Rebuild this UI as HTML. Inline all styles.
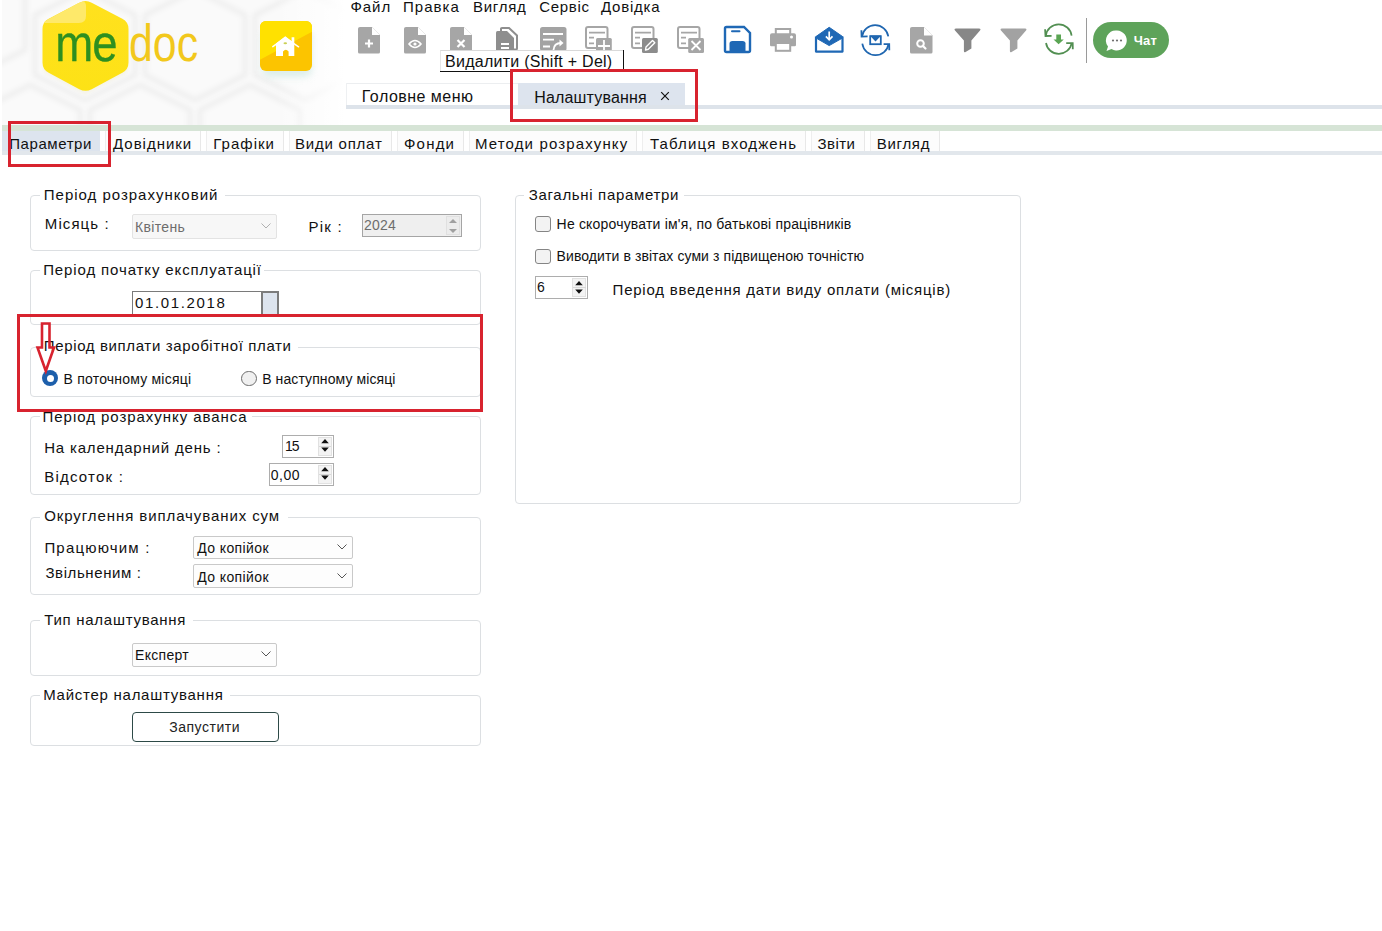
<!DOCTYPE html>
<html><head><meta charset="utf-8">
<style>
html,body{margin:0;padding:0;}
body{width:1382px;height:931px;position:relative;overflow:hidden;background:#fff;font-family:"Liberation Sans",sans-serif;}
.a{position:absolute;box-sizing:border-box;}
.t{position:absolute;white-space:pre;font-family:"Liberation Sans",sans-serif;}
.fs{position:absolute;box-sizing:border-box;border:1px solid #dcdfe2;border-radius:4px;}
.lg{position:absolute;background:#fff;height:8px;}
.red{position:absolute;box-sizing:border-box;border:3px solid #d8232f;}
.sel{position:absolute;box-sizing:border-box;border:1px solid #cfcfcf;background:#fdfdfd;border-radius:2px;}
.spin{position:absolute;box-sizing:border-box;border:1px solid #adadad;background:#fff;}
svg{position:absolute;overflow:visible;}
</style></head>
<body>
<!-- header honeycomb background -->
<div class="a" style="left:0;top:0;width:345px;height:125px;overflow:hidden">
<svg style="left:0;top:0;overflow:hidden" width="345" height="125" viewBox="0 0 345 125">
  <defs>
    <filter id="bl" x="-30%" y="-30%" width="160%" height="160%"><feGaussianBlur stdDeviation="2.5"/></filter>
    <linearGradient id="fade" x1="0" y1="0" x2="1" y2="0"><stop offset="0.8" stop-color="#fff" stop-opacity="0"/><stop offset="1" stop-color="#fff" stop-opacity="1"/></linearGradient>
  </defs>
  <rect x="0" y="0" width="345" height="125" fill="#fafafa"/>
  <g fill="none" stroke="#efefef" stroke-width="5" filter="url(#bl)" stroke-linejoin="round">
    <path d="M-25 -30 L25 -5 L25 50 L-25 75 L-75 50 L-75 -5 Z"/>
    <path d="M85 -10 L135 15 L135 75 L85 100 L35 75 L35 15 Z"/>
    <path d="M195 -10 L245 15 L245 75 L195 100 L145 75 L145 15 Z"/>
    <path d="M305 -10 L355 15 L355 75 L305 100 L255 75 L255 15 Z"/>
    <path d="M30 85 L80 110 L80 170 L30 195 L-20 170 L-20 110 Z"/>
    <path d="M140 85 L190 110 L190 170 L140 195 L90 170 L90 110 Z"/>
    <path d="M250 85 L300 110 L300 170 L250 195 L200 170 L200 110 Z"/>
  </g>
  <rect x="0" y="0" width="345" height="125" fill="url(#fade)"/>
  <rect x="0" y="0" width="2" height="125" fill="#fff"/>
</svg>
</div>

<!-- logo hexagon -->
<svg style="left:0;top:0" width="210" height="100" viewBox="0 0 210 100">
  <defs>
    <linearGradient id="hg" x1="0" y1="0" x2="0" y2="1">
      <stop offset="0" stop-color="#ffe11e"/><stop offset="1" stop-color="#fde216"/>
    </linearGradient>
    <filter id="hs" x="-20%" y="-20%" width="140%" height="140%"><feGaussianBlur stdDeviation="1.5"/></filter>
  </defs>
  <path d="M85 3 Q86 1 88 2 L125 21 Q128 23 128 27 L128 66 Q128 70 125 72 L88 91 Q85 93 82 91 L46 72 Q43 70 43 66 L43 27 Q43 23 46 22 Z" fill="#ece7c8" opacity="0.35" filter="url(#hs)" transform="translate(0,2)"/>
  <path d="M79.3 2.7 Q85.5 -0.5 91.7 2.7 L122.3 18.8 Q128.5 22.0 128.5 29.0 L128.5 62.5 Q128.5 69.5 122.3 72.8 L91.7 89.2 Q85.5 92.5 79.3 89.2 L48.7 72.8 Q42.5 69.5 42.5 62.5 L42.5 29.0 Q42.5 22.0 48.7 18.8 Z" fill="url(#hg)"/>
  <path d="M78 3.2 Q86 -1 86 6 L86 16 Q86 23 79 23 L44 23 Q44 21.5 47 20 Z" fill="#fee96a"/>
  <text x="55" y="60.6" font-family="Liberation Sans" font-size="53" fill="#2e8f20" stroke="#2e8f20" stroke-width="0.3" transform="translate(56,60.6) scale(0.86,0.98) translate(-56,-60.6)" letter-spacing="-1">me</text>
  <text x="129" y="60.6" font-family="Liberation Sans" font-size="51" fill="#f2c81c" transform="translate(129,60.6) scale(0.84,1) translate(-129,-60.6)">doc</text>
</svg>

<!-- home button -->
<div class="a" style="left:262px;top:30px;width:50px;height:47px;border-radius:8px;background:#d5ebe6;filter:blur(3.5px);opacity:0.8"></div>
<svg style="left:0;top:0" width="330" height="80" viewBox="0 0 330 80">
  <defs><clipPath id="hb"><rect x="260" y="21" width="52" height="50" rx="6"/></clipPath></defs>
  <g clip-path="url(#hb)">
    <rect x="260" y="21" width="52" height="50" fill="#fcc400"/>
    <path d="M258 19 L314 19 L314 30.7 L258 60.9 Z" fill="#ffe100"/>
  </g>
  <path d="M276 56 L276 43.5 L285.3 36.3 L291.6 41.2 L291.6 37.2 L294.3 37.2 L294.3 43.3 L294.3 56 L288.6 56 L288.6 51.5 Q285.8 48.2 283 51.5 L283 56 Z" fill="#fff"/>
  <path d="M272.8 46.6 L285.3 37.6 L298.6 46.8" fill="none" stroke="#fff" stroke-width="1.5" stroke-linecap="round"/>
  <ellipse cx="285.3" cy="43.2" rx="1.8" ry="1" fill="#c9cf54"/>
</svg>

<!-- toolbar icons -->
<!-- 1 doc plus -->
<svg style="left:358px;top:26.5px" width="23" height="27" viewBox="0 0 23 27">
  <path d="M2 0 L14 0 L22 8 L22 25 Q22 26.5 20.5 26.5 L1.5 26.5 Q0 26.5 0 25 L0 1.5 Q0 0 2 0 Z" fill="#a6a6a6"/>
  <path d="M14 0 L22 8 L14 8 Z" fill="#fff"/>
  <path d="M11 12.5 L11 20.5 M7 16.5 L15 16.5" stroke="#fff" stroke-width="2.2"/>
</svg>
<!-- 2 doc eye -->
<svg style="left:404px;top:26.5px" width="23" height="27" viewBox="0 0 23 27">
  <path d="M2 0 L14 0 L22 8 L22 25 Q22 26.5 20.5 26.5 L1.5 26.5 Q0 26.5 0 25 L0 1.5 Q0 0 2 0 Z" fill="#a6a6a6"/>
  <path d="M14 0 L22 8 L14 8 Z" fill="#fff"/>
  <path d="M5 17 Q11 10 17 17 Q11 24 5 17 Z" fill="none" stroke="#fff" stroke-width="1.6"/>
  <circle cx="11" cy="17" r="1.6" fill="#fff"/>
</svg>
<!-- 3 doc x -->
<svg style="left:450px;top:26.5px" width="23" height="27" viewBox="0 0 23 27">
  <path d="M2 0 L14 0 L22 8 L22 25 Q22 26.5 20.5 26.5 L1.5 26.5 Q0 26.5 0 25 L0 1.5 Q0 0 2 0 Z" fill="#a6a6a6"/>
  <path d="M14 0 L22 8 L14 8 Z" fill="#fff"/>
  <path d="M7.5 13 L14.5 20 M14.5 13 L7.5 20" stroke="#fff" stroke-width="2.2"/>
</svg>
<!-- 4 stacked docs -->
<svg style="left:496px;top:26.5px" width="23" height="27" viewBox="0 0 23 27">
  <path d="M5 4 L5 1.5 Q5 1 6 1 L13 1 L21 8.5 L21 21.5 Q21 22.5 20 22.5 L18 22.5" fill="none" stroke="#8e8e8e" stroke-width="2"/>
  <path d="M1.5 4 L11 4 L18 11 L18 27 L0 27 L0 5.5 Q0 4 1.5 4 Z" fill="#8e8e8e"/>
  <path d="M5 17 L13 17 M5 21 L13 21" stroke="#fff" stroke-width="2"/>
</svg>
<!-- 5 list redo -->
<svg style="left:540px;top:26.8px" width="27" height="24" viewBox="0 0 27 24">
  <rect x="0" y="0" width="26.5" height="24" rx="2.5" fill="#a3a3a3"/>
  <path d="M3 7 L23 7 M3 12.6 L14 12.6 M3 19.5 L10 19.5" stroke="#fff" stroke-width="1.8"/>
  <path d="M13.5 23 Q14 16 21 16" fill="none" stroke="#fff" stroke-width="1.8"/>
  <path d="M19.5 12.5 L23.5 16 L19.5 19.5 Z" fill="#fff"/>
</svg>
<!-- 6 list add -->
<svg style="left:585px;top:26px" width="27" height="27" viewBox="0 0 27 27">
  <rect x="1" y="1" width="21.5" height="21" rx="2" fill="none" stroke="#a6a6a6" stroke-width="2"/>
  <path d="M4 6.7 L20 6.7 M4 11.7 L9 11.7 M4 17.4 L9 17.4" stroke="#a6a6a6" stroke-width="1.7"/>
  <rect x="11" y="12" width="15.8" height="15" rx="1.5" fill="#a6a6a6"/>
  <path d="M19 14 L19 26 M13 20 L25 20" stroke="#fff" stroke-width="1.8"/>
</svg>
<!-- 7 list edit -->
<svg style="left:631px;top:26px" width="27" height="27" viewBox="0 0 27 27">
  <rect x="1" y="1" width="21.5" height="21" rx="2" fill="none" stroke="#a6a6a6" stroke-width="2"/>
  <path d="M4 6.7 L20 6.7 M4 11.7 L9 11.7 M4 17.4 L9 17.4" stroke="#a6a6a6" stroke-width="1.7"/>
  <rect x="11" y="12" width="15.8" height="15" rx="1.5" fill="#8c8c8c"/>
  <path d="M14.5 24 L15 21 L21.5 14.5 L23.8 16.8 L17.3 23.3 Z" fill="none" stroke="#fff" stroke-width="1.4" stroke-linejoin="round"/>
</svg>
<!-- 8 list x -->
<svg style="left:677px;top:26px" width="28" height="27" viewBox="0 0 28 27">
  <rect x="1" y="1" width="21.5" height="21" rx="2" fill="none" stroke="#a6a6a6" stroke-width="2"/>
  <path d="M4 6.7 L20 6.7 M4 11.7 L9 11.7 M4 17.4 L9 17.4" stroke="#a6a6a6" stroke-width="1.7"/>
  <rect x="11.2" y="12" width="15.8" height="15" rx="1.5" fill="#a6a6a6"/>
  <path d="M14.5 15 L23.5 24 M23.5 15 L14.5 24" stroke="#fff" stroke-width="1.8"/>
</svg>
<!-- 9 save -->
<svg style="left:723.5px;top:26.3px" width="27" height="27" viewBox="0 0 27 27">
  <path d="M2.5 1 L20 1 L26 7 L26 24.5 Q26 26 24.5 26 L2.5 26 Q1 26 1 24.5 L1 2.5 Q1 1 2.5 1 Z" fill="none" stroke="#1f68b5" stroke-width="2.4"/>
  <path d="M8 5.2 L15.5 5.2" stroke="#1f68b5" stroke-width="2" stroke-linecap="round"/>
  <path d="M5.5 26 L5.5 17.5 Q5.5 15 8.5 15 L18.5 15 Q21.5 15 21.5 17.5 L21.5 26 Z" fill="#1f68b5"/>
</svg>
<!-- 10 print -->
<svg style="left:769.4px;top:28px" width="28" height="24" viewBox="0 0 28 24">
  <rect x="6.8" y="1" width="14.4" height="6" fill="none" stroke="#a6a6a6" stroke-width="2"/>
  <path d="M3 5.2 L25 5.2 Q27 5.2 27 7.2 L27 17 Q27 18.3 25.7 18.3 L22 18.3 L22 15 L6 15 L6 18.3 L2.3 18.3 Q1 18.3 1 17 L1 7.2 Q1 5.2 3 5.2 Z" fill="#a6a6a6"/>
  <rect x="6.8" y="15" width="14.4" height="7.8" fill="none" stroke="#a6a6a6" stroke-width="2"/>
  <circle cx="22.5" cy="9" r="1.5" fill="#fff"/>
</svg>
<!-- 11 mail download -->
<svg style="left:815px;top:26.8px" width="29" height="26" viewBox="0 0 29 26">
  <path d="M1 9.5 L14.2 0.3 L27.5 9.5 L27.5 11 L14.2 18.6 L1 11 Z" fill="#1f68b5" stroke="#1f68b5" stroke-width="1" stroke-linejoin="round"/>
  <path d="M1 9.5 L1 24.6 L27.5 24.6 L27.5 9.5" fill="none" stroke="#1f68b5" stroke-width="2.2" stroke-linejoin="round"/>
  <path d="M14.2 4.6 L14.2 12.6 M10.9 9.4 L14.2 12.8 L17.5 9.4" fill="none" stroke="#fff" stroke-width="1.7"/>
</svg>
<!-- 12 sync mail -->
<svg style="left:860.7px;top:25.8px" width="29" height="29" viewBox="0 0 29 29">
  <path d="M1 10.6 A13.3 13.3 0 0 1 27.3 10.4" fill="none" stroke="#1f66b0" stroke-width="1.7"/>
  <path d="M1.3 17.7 A13.3 13.3 0 0 0 27.6 18" fill="none" stroke="#1f66b0" stroke-width="1.7"/>
  <path d="M0.4 4.2 L0.6 10.6 L6.6 10.4" fill="none" stroke="#1f66b0" stroke-width="1.8"/>
  <path d="M22.6 18.2 L28.2 18.2 L28.3 24.3" fill="none" stroke="#1f66b0" stroke-width="1.8"/>
  <rect x="9.2" y="10.2" width="10.6" height="8" fill="none" stroke="#1f66b0" stroke-width="1.8"/>
  <path d="M8.8 9.6 L20.2 9.6 L14.5 15.6 Z" fill="#1f66b0"/>
</svg>
<!-- 13 doc search -->
<svg style="left:909.7px;top:26.8px" width="23" height="27" viewBox="0 0 23 27">
  <path d="M2 0 L14 0 L22.5 8.5 L22.5 25 Q22.5 26.5 21 26.5 L1.5 26.5 Q0 26.5 0 25 L0 1.5 Q0 0 2 0 Z" fill="#a6a6a6"/>
  <path d="M14 0 L22.5 8.5 L14 8.5 Z" fill="#fff"/>
  <circle cx="10.5" cy="16.5" r="3.3" fill="none" stroke="#fff" stroke-width="2"/>
  <path d="M13 19 L15.5 21.5" stroke="#fff" stroke-width="2.2" stroke-linecap="round"/>
</svg>
<!-- 14 filter dark -->
<svg style="left:953.5px;top:27.5px" width="27" height="25" viewBox="0 0 27 25">
  <path d="M2 0.5 L25 0.5 Q27.3 0.7 26 2.6 L17.4 12.6 L17.4 20.5 L11.6 24 Q9.9 24.8 9.9 23 L9.9 12.6 L1 2.6 Q-0.3 0.7 2 0.5 Z" fill="#878787"/>
</svg>
<!-- 15 filter -->
<svg style="left:999.9px;top:27.5px" width="27" height="25" viewBox="0 0 27 25">
  <path d="M2 0.5 L25 0.5 Q27.3 0.7 26 2.6 L17.4 12.6 L17.4 20.5 L11.6 24 Q9.9 24.8 9.9 23 L9.9 12.6 L1 2.6 Q-0.3 0.7 2 0.5 Z" fill="#a2a2a2"/>
</svg>
<!-- 16 sync down green -->
<svg style="left:1044.2px;top:25.4px" width="30" height="29" viewBox="0 0 30 29">
  <path d="M1.8 10.8 A13 13 0 0 1 27.6 10.6" fill="none" stroke="#528f52" stroke-width="1.7"/>
  <path d="M2 18 A13 13 0 0 0 27.6 18.3" fill="none" stroke="#528f52" stroke-width="1.7"/>
  <path d="M1.1 4.3 L1.5 11 L7.6 10.8" fill="none" stroke="#528f52" stroke-width="1.8"/>
  <path d="M22.2 18.2 L28.7 18.2 L28.8 24.3" fill="none" stroke="#528f52" stroke-width="1.8"/>
  <path d="M12.3 9.6 L17 9.6 L17 14.4 L19.8 14.4 L14.6 19.3 L9.5 14.4 L12.3 14.4 Z" fill="#5aa553"/>
</svg>
<!-- separator -->
<div class="a" style="left:1086px;top:17.5px;width:1px;height:45px;background:#9a9a9a"></div>
<!-- chat -->
<div class="a" style="left:1093px;top:22px;width:76px;height:36px;border-radius:18px;background:#5ea35a"></div>
<svg style="left:1106px;top:30px" width="22" height="22" viewBox="0 0 22 22">
  <path d="M11 0.5 A10 10 0 1 1 5.5 19 L0.5 21 L2 16.5 A10 10 0 0 1 11 0.5 Z" fill="#fff"/>
  <circle cx="7" cy="10.5" r="1.1" fill="#707070"/><circle cx="11" cy="10.5" r="1.1" fill="#707070"/><circle cx="15" cy="10.5" r="1.1" fill="#707070"/>
</svg>

<!-- tooltip -->
<div class="a" style="left:440px;top:50px;width:184px;height:22px;background:#fff;border-top:1px solid #d9d9d9;border-left:1px solid #e6e6e6;"></div>
<div class="a" style="left:623px;top:50px;width:1.2px;height:19px;background:#111"></div>
<div class="a" style="left:440px;top:70.8px;width:72px;height:1.4px;background:#111"></div>

<!-- top tabs -->
<div class="a" style="left:346px;top:83px;width:172px;height:1px;background:#eceef0"></div>
<div class="a" style="left:346px;top:83px;width:1px;height:23px;background:#eef0f2"></div>
<div class="a" style="left:346px;top:105px;width:1036px;height:3.5px;background:#dde3ea"></div>
<div class="a" style="left:518px;top:83px;width:167px;height:22px;background:#dde4ee"></div>
<svg style="left:660px;top:91px" width="10" height="10" viewBox="0 0 10 10">
  <path d="M1.2 1.2 L8.8 8.8 M8.8 1.2 L1.2 8.8" stroke="#111" stroke-width="1.2"/>
</svg>

<!-- green band & tab row -->
<div class="a" style="left:2px;top:125px;width:1380px;height:6px;background:#d6e4d6"></div>
<div class="a" style="left:2px;top:131px;width:1380px;height:20px;background:#fff"></div>
<div class="a" style="left:2px;top:150.5px;width:1380px;height:4px;background:#e2e7ec"></div>
<div class="a" style="left:2px;top:131px;width:98px;height:19.5px;background:#dde4ee"></div>
<div class="a" style="left:100px;top:131px;width:6px;height:19.5px;background:#fff;border-right:1px solid #eee"></div>
<div class="a" style="left:106px;top:131px;width:95px;height:19.5px;background:#fcfcfc;border-right:1px solid #e8e8e8"></div>
<div class="a" style="left:206px;top:131px;width:78px;height:19.5px;background:#fcfcfc;border-left:1px solid #eee;border-right:1px solid #e8e8e8"></div>
<div class="a" style="left:289px;top:131px;width:103px;height:19.5px;background:#fcfcfc;border-left:1px solid #eee;border-right:1px solid #e8e8e8"></div>
<div class="a" style="left:397px;top:131px;width:67px;height:19.5px;background:#fcfcfc;border-left:1px solid #eee;border-right:1px solid #e8e8e8"></div>
<div class="a" style="left:469px;top:131px;width:168px;height:19.5px;background:#fcfcfc;border-left:1px solid #eee;border-right:1px solid #e8e8e8"></div>
<div class="a" style="left:642px;top:131px;width:164px;height:19.5px;background:#fcfcfc;border-left:1px solid #eee;border-right:1px solid #e8e8e8"></div>
<div class="a" style="left:811px;top:131px;width:54px;height:19.5px;background:#fcfcfc;border-left:1px solid #eee;border-right:1px solid #e8e8e8"></div>
<div class="a" style="left:870px;top:131px;width:70px;height:19.5px;background:#fcfcfc;border-left:1px solid #eee;border-right:1px solid #e8e8e8"></div>

<!-- fieldsets left -->
<div class="fs" style="left:30px;top:195px;width:451px;height:55.5px"></div>
<div class="lg" style="left:40px;top:191px;width:185px"></div>
<div class="sel" style="left:132px;top:214px;width:145px;height:24.5px;background:#f7f7f7;border-color:#e3e3e3"></div>
<svg style="left:261px;top:223px" width="10" height="6" viewBox="0 0 10 6"><path d="M0.5 0.5 L5 5 L9.5 0.5" fill="none" stroke="#b0b0b0" stroke-width="1"/></svg>
<div class="spin" style="left:362px;top:214px;width:100px;height:22.5px;background:#efefef;border-color:#a5a5a5"></div>
<div class="a" style="left:446px;top:216px;width:14px;height:18.5px;background:#ececec;border:1px solid #e0e0e0"></div>
<svg style="left:448px;top:217.5px" width="10" height="16" viewBox="0 0 10 16"><path d="M1 5 L5 1 L9 5 Z M1 11 L5 15 L9 11 Z" fill="#a0a0a0"/></svg>

<div class="fs" style="left:30px;top:270px;width:451px;height:54.5px"></div>
<div class="lg" style="left:40px;top:266px;width:224px"></div>
<div class="spin" style="left:132px;top:291px;width:147px;height:26px;border-color:#7a7a7a"></div>
<div class="a" style="left:261px;top:291px;width:18px;height:26px;background:#dde4ee;border:2px solid #7c7c7c"></div>

<div class="fs" style="left:30px;top:347px;width:451px;height:50px"></div>
<div class="lg" style="left:40px;top:343px;width:258px"></div>
<div class="a" style="left:42px;top:370px;width:16px;height:16px;border-radius:50%;background:#1d5fab"></div>
<div class="a" style="left:46.5px;top:374.5px;width:7px;height:7px;border-radius:50%;background:#fff"></div>
<div class="a" style="left:241px;top:370.5px;width:15.5px;height:15.5px;border-radius:50%;background:#f0f0f0;border:1px solid #6c6c6c"></div>

<div class="fs" style="left:30px;top:416px;width:451px;height:78.5px"></div>
<div class="lg" style="left:40px;top:412px;width:212px"></div>
<div class="spin" style="left:282px;top:435px;width:51.5px;height:23px"></div>
<div class="a" style="left:318px;top:437px;width:13.5px;height:19px;background:#f3f3f3;border:1px solid #e1e1e1"></div>
<div class="a" style="left:318.5px;top:446px;width:12.5px;height:1px;background:#d8d8d8"></div><svg style="left:320px;top:437px" width="10" height="17" viewBox="0 0 10 17"><path d="M1.2 6.2 L5 2 L8.8 6.2 Z M1.2 10.5 L5 14.7 L8.8 10.5 Z" fill="#111"/></svg>
<div class="spin" style="left:269px;top:463px;width:64.5px;height:22.5px"></div>
<div class="a" style="left:318px;top:465px;width:13.5px;height:18.5px;background:#f3f3f3;border:1px solid #e1e1e1"></div>
<div class="a" style="left:318.5px;top:474px;width:12.5px;height:1px;background:#d8d8d8"></div><svg style="left:320px;top:465px" width="10" height="17" viewBox="0 0 10 17"><path d="M1.2 6.2 L5 2 L8.8 6.2 Z M1.2 10.5 L5 14.7 L8.8 10.5 Z" fill="#111"/></svg>

<div class="fs" style="left:30px;top:517px;width:451px;height:77.5px"></div>
<div class="lg" style="left:40px;top:513px;width:248px"></div>
<div class="sel" style="left:193px;top:535.5px;width:159.5px;height:23.5px;border-color:#c9c9c9"></div>
<svg style="left:337px;top:544px" width="10" height="6" viewBox="0 0 10 6"><path d="M0.5 0.5 L5 5 L9.5 0.5" fill="none" stroke="#555" stroke-width="1"/></svg>
<div class="sel" style="left:193px;top:564px;width:159.5px;height:23.5px;border-color:#c9c9c9"></div>
<svg style="left:337px;top:572.5px" width="10" height="6" viewBox="0 0 10 6"><path d="M0.5 0.5 L5 5 L9.5 0.5" fill="none" stroke="#555" stroke-width="1"/></svg>

<div class="fs" style="left:30px;top:620px;width:451px;height:55.5px"></div>
<div class="lg" style="left:40px;top:616px;width:153px"></div>
<div class="sel" style="left:132px;top:642.5px;width:145px;height:24px;border-color:#c9c9c9"></div>
<svg style="left:261px;top:651px" width="10" height="6" viewBox="0 0 10 6"><path d="M0.5 0.5 L5 5 L9.5 0.5" fill="none" stroke="#555" stroke-width="1"/></svg>

<div class="fs" style="left:30px;top:695px;width:451px;height:50.5px"></div>
<div class="lg" style="left:40px;top:691px;width:190px"></div>
<div class="a" style="left:132px;top:712px;width:147px;height:29.5px;border:1.3px solid #2d4a47;border-radius:4px;background:#fff"></div>

<!-- right fieldset -->
<div class="fs" style="left:515px;top:195px;width:506px;height:308.5px"></div>
<div class="lg" style="left:524px;top:191px;width:160px"></div>
<div class="a" style="left:535px;top:216px;width:16px;height:15.5px;border-radius:3px;background:#f3f3f3;border:1px solid #858585"></div>
<div class="a" style="left:535px;top:248.5px;width:16px;height:15.5px;border-radius:3px;background:#f3f3f3;border:1px solid #858585"></div>
<div class="spin" style="left:535px;top:276px;width:53px;height:23px"></div>
<div class="a" style="left:572px;top:278px;width:14px;height:19px;background:#f3f3f3;border:1px solid #e1e1e1"></div>
<div class="a" style="left:572.5px;top:286.5px;width:13px;height:1px;background:#d8d8d8"></div><svg style="left:574px;top:278.5px" width="10" height="17" viewBox="0 0 10 17"><path d="M1.2 6.2 L5 2 L8.8 6.2 Z M1.2 10.5 L5 14.7 L8.8 10.5 Z" fill="#111"/></svg>

<div class="t" style="left:350.4px;top:-0.70px;font-size:15px;line-height:15px;letter-spacing:0.970px;color:#111;font-weight:400;-webkit-text-stroke:0px #111">Файл</div>
<div class="t" style="left:403.0px;top:-0.70px;font-size:15px;line-height:15px;letter-spacing:1.026px;color:#111;font-weight:400;-webkit-text-stroke:0px #111">Правка</div>
<div class="t" style="left:473.0px;top:-0.70px;font-size:15px;line-height:15px;letter-spacing:0.729px;color:#111;font-weight:400;-webkit-text-stroke:0px #111">Вигляд</div>
<div class="t" style="left:539.2px;top:-0.70px;font-size:15px;line-height:15px;letter-spacing:0.694px;color:#111;font-weight:400;-webkit-text-stroke:0px #111">Сервіс</div>
<div class="t" style="left:601.0px;top:-0.70px;font-size:15px;line-height:15px;letter-spacing:0.772px;color:#111;font-weight:400;-webkit-text-stroke:0px #111">Довідка</div>
<div class="t" style="left:445.0px;top:53.86px;font-size:16px;line-height:16px;letter-spacing:0.260px;color:#111;font-weight:400">Видалити (Shift + Del)</div>
<div class="t" style="left:361.8px;top:88.86px;font-size:16px;line-height:16px;letter-spacing:0.476px;color:#111;font-weight:400">Головне меню</div>
<div class="t" style="left:534.2px;top:89.76px;font-size:16px;line-height:16px;letter-spacing:0.182px;color:#111;font-weight:400">Налаштування</div>
<div class="t" style="left:9.2px;top:136.10px;font-size:15px;line-height:15px;letter-spacing:0.580px;color:#111;font-weight:400;-webkit-text-stroke:0px #111">Параметри</div>
<div class="t" style="left:113.0px;top:136.10px;font-size:15px;line-height:15px;letter-spacing:0.984px;color:#111;font-weight:400;-webkit-text-stroke:0px #111">Довідники</div>
<div class="t" style="left:213.2px;top:136.10px;font-size:15px;line-height:15px;letter-spacing:1.034px;color:#111;font-weight:400;-webkit-text-stroke:0px #111">Графіки</div>
<div class="t" style="left:295.0px;top:136.10px;font-size:15px;line-height:15px;letter-spacing:0.778px;color:#111;font-weight:400;-webkit-text-stroke:0px #111">Види оплат</div>
<div class="t" style="left:404.0px;top:136.10px;font-size:15px;line-height:15px;letter-spacing:1.207px;color:#111;font-weight:400;-webkit-text-stroke:0px #111">Фонди</div>
<div class="t" style="left:475.0px;top:136.10px;font-size:15px;line-height:15px;letter-spacing:1.130px;color:#111;font-weight:400;-webkit-text-stroke:0px #111">Методи розрахунку</div>
<div class="t" style="left:650.0px;top:136.10px;font-size:15px;line-height:15px;letter-spacing:1.113px;color:#111;font-weight:400;-webkit-text-stroke:0px #111">Таблиця входжень</div>
<div class="t" style="left:817.6px;top:136.10px;font-size:15px;line-height:15px;letter-spacing:0.394px;color:#111;font-weight:400;-webkit-text-stroke:0px #111">Звіти</div>
<div class="t" style="left:876.8px;top:136.10px;font-size:15px;line-height:15px;letter-spacing:0.689px;color:#111;font-weight:400;-webkit-text-stroke:0px #111">Вигляд</div>
<div class="t" style="left:43.8px;top:187.40px;font-size:15px;line-height:15px;letter-spacing:0.984px;color:#111;font-weight:400;-webkit-text-stroke:0px #111">Період розрахунковий</div>
<div class="t" style="left:44.8px;top:216.00px;font-size:15px;line-height:15px;letter-spacing:1.085px;color:#111;font-weight:400;-webkit-text-stroke:0px #111">Місяць :</div>
<div class="t" style="left:135.0px;top:219.75px;font-size:14px;line-height:14px;letter-spacing:0.336px;color:#6d6d6d;font-weight:400">Квітень</div>
<div class="t" style="left:308.4px;top:218.50px;font-size:15px;line-height:15px;letter-spacing:1.238px;color:#111;font-weight:400;-webkit-text-stroke:0px #111">Рік :</div>
<div class="t" style="left:364.0px;top:217.85px;font-size:14px;line-height:14px;letter-spacing:0.215px;color:#6d6d6d;font-weight:400">2024</div>
<div class="t" style="left:43.2px;top:262.00px;font-size:15px;line-height:15px;letter-spacing:0.881px;color:#111;font-weight:400;-webkit-text-stroke:0px #111">Період початку експлуатації</div>
<div class="t" style="left:135.0px;top:295.40px;font-size:15px;line-height:15px;letter-spacing:1.636px;color:#111;font-weight:400;-webkit-text-stroke:0px #111">01.01.2018</div>
<div class="t" style="left:43.8px;top:338.00px;font-size:15px;line-height:15px;letter-spacing:0.634px;color:#111;font-weight:400;-webkit-text-stroke:0px #111">Період виплати заробітної плати</div>
<div class="t" style="left:63.6px;top:371.65px;font-size:14px;line-height:14px;letter-spacing:0.203px;color:#111;font-weight:400">В поточному місяці</div>
<div class="t" style="left:262.2px;top:371.65px;font-size:14px;line-height:14px;letter-spacing:0.093px;color:#111;font-weight:400">В наступному місяці</div>
<div class="t" style="left:42.6px;top:408.80px;font-size:15px;line-height:15px;letter-spacing:0.952px;color:#111;font-weight:400;-webkit-text-stroke:0px #111">Період розрахунку аванса</div>
<div class="t" style="left:44.2px;top:440.30px;font-size:15px;line-height:15px;letter-spacing:0.813px;color:#111;font-weight:400;-webkit-text-stroke:0px #111">На календарний день :</div>
<div class="t" style="left:285.0px;top:438.75px;font-size:14px;line-height:14px;letter-spacing:-0.978px;color:#111;font-weight:400">15</div>
<div class="t" style="left:44.2px;top:469.20px;font-size:15px;line-height:15px;letter-spacing:1.231px;color:#111;font-weight:400;-webkit-text-stroke:0px #111">Відсоток :</div>
<div class="t" style="left:270.8px;top:467.75px;font-size:14px;line-height:14px;letter-spacing:0.517px;color:#111;font-weight:400">0,00</div>
<div class="t" style="left:44.2px;top:508.10px;font-size:15px;line-height:15px;letter-spacing:0.916px;color:#111;font-weight:400;-webkit-text-stroke:0px #111">Округлення виплачуваних сум</div>
<div class="t" style="left:44.4px;top:540.00px;font-size:15px;line-height:15px;letter-spacing:1.192px;color:#111;font-weight:400;-webkit-text-stroke:0px #111">Працюючим :</div>
<div class="t" style="left:197.2px;top:541.35px;font-size:14px;line-height:14px;letter-spacing:0.399px;color:#111;font-weight:400">До копійок</div>
<div class="t" style="left:45.4px;top:564.50px;font-size:15px;line-height:15px;letter-spacing:0.611px;color:#111;font-weight:400;-webkit-text-stroke:0px #111">Звільненим :</div>
<div class="t" style="left:197.2px;top:569.65px;font-size:14px;line-height:14px;letter-spacing:0.399px;color:#111;font-weight:400">До копійок</div>
<div class="t" style="left:44.2px;top:612.00px;font-size:15px;line-height:15px;letter-spacing:0.726px;color:#111;font-weight:400;-webkit-text-stroke:0px #111">Тип налаштування</div>
<div class="t" style="left:135.0px;top:647.95px;font-size:14px;line-height:14px;letter-spacing:0.318px;color:#111;font-weight:400">Експерт</div>
<div class="t" style="left:43.2px;top:687.00px;font-size:15px;line-height:15px;letter-spacing:0.738px;color:#111;font-weight:400;-webkit-text-stroke:0px #111">Майстер налаштування</div>
<div class="t" style="left:169.2px;top:719.85px;font-size:14px;line-height:14px;letter-spacing:0.532px;color:#222;font-weight:400">Запустити</div>
<div class="t" style="left:528.8px;top:186.70px;font-size:15px;line-height:15px;letter-spacing:0.674px;color:#111;font-weight:400;-webkit-text-stroke:0px #111">Загальні параметри</div>
<div class="t" style="left:556.6px;top:217.15px;font-size:14px;line-height:14px;letter-spacing:0.185px;color:#111;font-weight:400">Не скорочувати ім'я, по батькові працівників</div>
<div class="t" style="left:556.6px;top:248.75px;font-size:14px;line-height:14px;letter-spacing:0.086px;color:#111;font-weight:400">Виводити в звітах суми з підвищеною точністю</div>
<div class="t" style="left:537.0px;top:279.65px;font-size:14px;line-height:14px;letter-spacing:0.000px;color:#111;font-weight:400">6</div>
<div class="t" style="left:612.6px;top:282.30px;font-size:15px;line-height:15px;letter-spacing:0.765px;color:#111;font-weight:400;-webkit-text-stroke:0px #111">Період введення дати виду оплати (місяців)</div>
<div class="t" style="left:1133.8px;top:34.40px;font-size:13px;line-height:13px;letter-spacing:0.133px;color:#fff;font-weight:700">Чат</div>

<!-- red annotation boxes -->
<div class="red" style="left:510px;top:69px;width:188px;height:52.5px"></div>
<div class="red" style="left:8px;top:121px;width:103px;height:46px"></div>
<div class="red" style="left:17px;top:314px;width:466px;height:97.5px"></div>
<svg style="left:36px;top:322px" width="20" height="52" viewBox="0 0 20 52">
  <path d="M6 1.5 L13.5 1.5 L13.5 25.5 L18 25.5 L9.8 49 L1.5 25.5 L6 25.5 Z" fill="none" stroke="#d8232f" stroke-width="2.6" stroke-linejoin="miter"/>
</svg>
</body></html>
